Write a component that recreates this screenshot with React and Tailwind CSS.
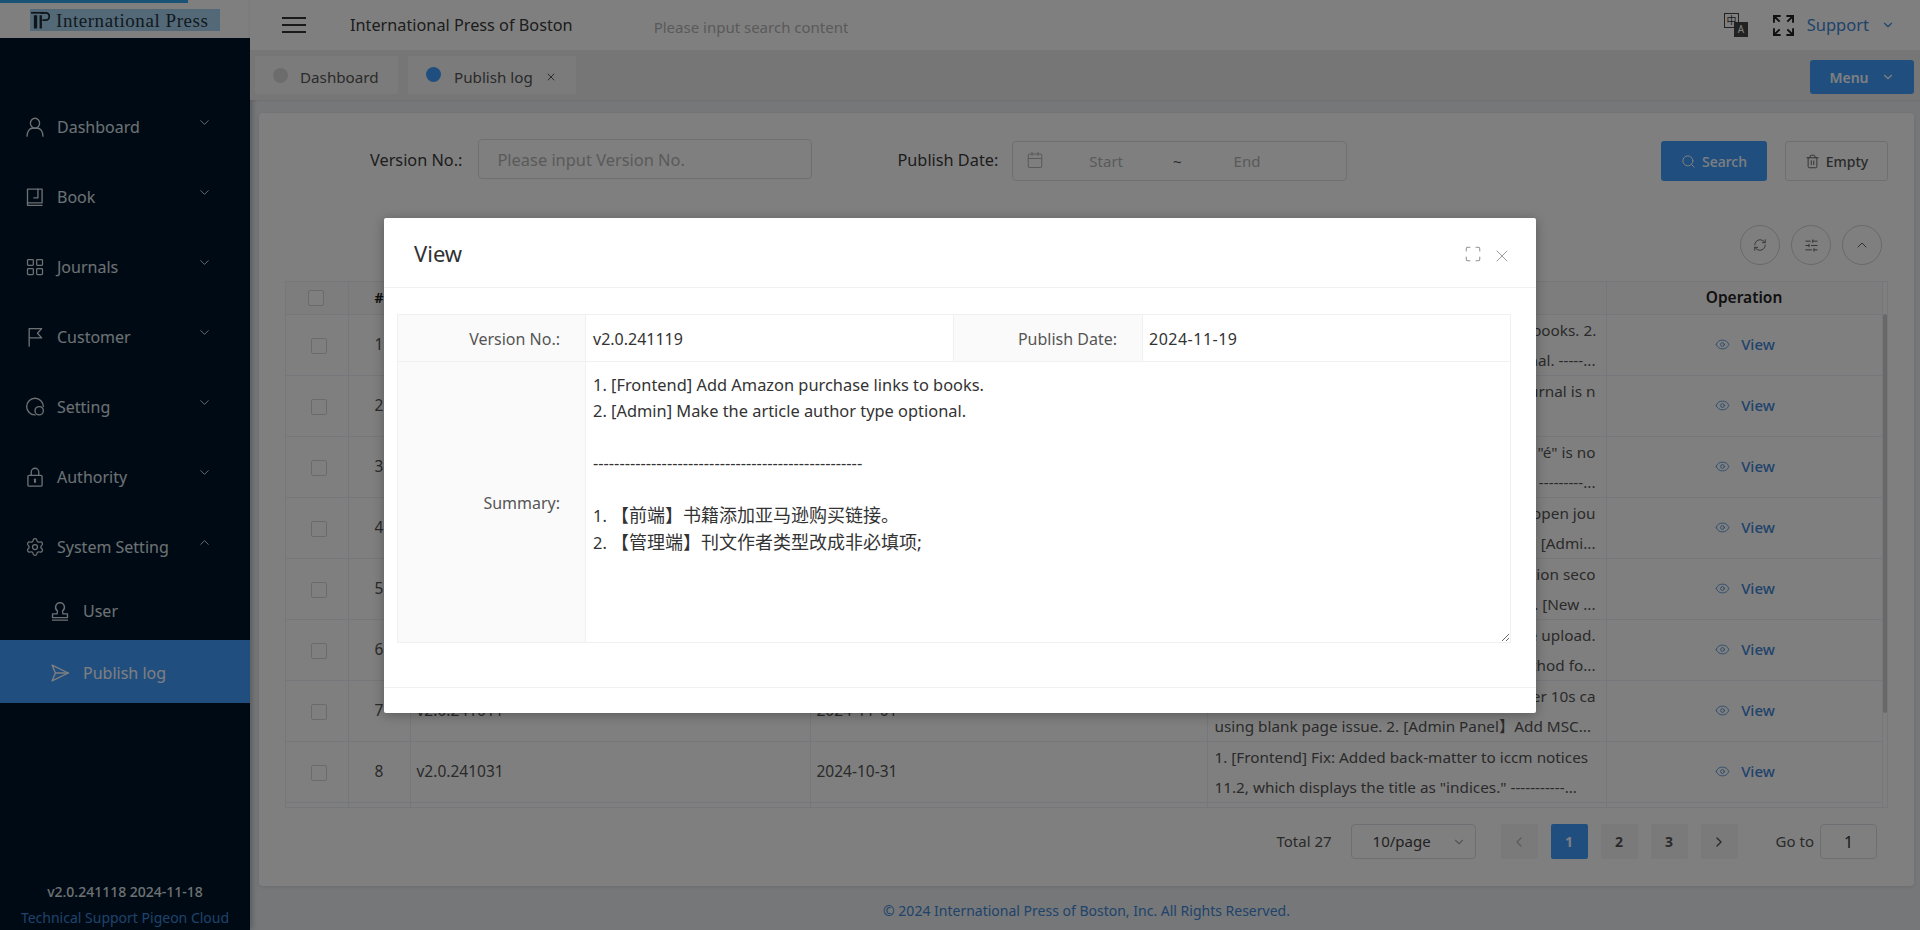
import { Calendar, ChevronDown, ChevronLeft, ChevronRight, ChevronUp, Eye, LayoutGrid, Maximize, RefreshCw, Search, Settings, SlidersHorizontal, Trash2, X } from "lucide-react";

const MENU = [
  { label: "Dashboard", icon: "user" },
  { label: "Book", icon: "book" },
  { label: "Journals", icon: "grid" },
  { label: "Customer", icon: "flag" },
  { label: "Setting", icon: "coin" },
  { label: "Authority", icon: "lock" },
];

const ROWS = [
  { no: 1, version: "v2.0.241119", date: "2024-11-19", a: "1. [Frontend] Add Amazon purchase links to books. 2.", b: "[Admin] Make the article author type optional. -----..." },
  { no: 2, version: "v2.0.241118", date: "2024-11-18", a: "1. [Frontend] Fix: the date of the open journal is n", b: "" },
  { no: 3, version: "v2.0.241115", date: "2024-11-15", a: "1. [Frontend] Fix: the character \"é\" is no", b: "t shown on the article page. ---------..." },
  { no: 4, version: "v2.0.241112", date: "2024-11-12", a: "1. [Frontend] Add a new section to the open jou", b: "rnal list of articles. [Admi..." },
  { no: 5, version: "v2.0.241108", date: "2024-11-08", a: "1. [Frontend] Fix the navigation seco", b: "ndary menu display. [New ..." },
  { no: 6, version: "v2.0.241105", date: "2024-11-05", a: "1. [Admin] Support batch file upload.", b: "2. [Admin] Change the sort method fo..." },
  { no: 7, version: "v2.0.241011", date: "2024-11-01", a: "1. [Frontend] Fix: reading after 10s ca", b: "using blank page issue. 2. [Admin Panel】Add MSC..." },
  { no: 8, version: "v2.0.241031", date: "2024-10-31", a: "1. [Frontend] Fix: Added back-matter to iccm notices", b: "11.2, which displays the title as \"indices.\" -----------..." },
];

function MenuIcon({ name }) {
  if (name === "grid") return <LayoutGrid size={20} strokeWidth={1.5} />;
  if (name === "gear") return <Settings size={20} strokeWidth={1.5} />;
  return (
    <svg viewBox="0 0 24 24" width="20" height="20" fill="none" stroke="currentColor" strokeWidth="1.6" strokeLinecap="round" strokeLinejoin="round">
      {name === "user" && (
        <>
          <ellipse cx="12" cy="7.500" rx="5.500" ry="6" />
          <path d="M2.500 23c0-6 3-9.500 6.500-9.500h6c3.500 0 6.500 3.500 6.500 9.500" />
        </>
      )}
      {name === "book" && (
        <>
          <path d="M3 19V2.500h17.500V19H3z" />
          <path d="M15.500 2.500v10.500h-5" />
          <path d="M3 19v3h17.500" />
        </>
      )}
      {name === "flag" && <path d="M5 23V2h15l-5 5.500 5 5.500H5" />}
      {name === "coin" && (
        <>
          <path d="M12 21.500a10 10 0 1 1 10-10" />
          <circle cx="17" cy="16.500" r="5" />
        </>
      )}
      {name === "lock" && (
        <>
          <rect x="3.500" y="10" width="17" height="13" rx="1.500" />
          <path d="M7.500 10V6a4.500 4.500 0 0 1 9 0v4" />
          <path d="M12 15v3" strokeWidth="2.500" />
        </>
      )}
      {name === "stamp" && (
        <>
          <path d="M12 2a5.500 5.500 0 0 0-3 10l-.5 3.500H3v4.500h18v-4.500h-5.500L15 12a5.500 5.500 0 0 0-3-10z" />
          <path d="M3 23h18" />
        </>
      )}
      {name === "plane" && (
        <>
          <path d="M2.500 2.500L22 12 2.500 21.500 6.500 12z" />
          <path d="M6.500 12H22" />
        </>
      )}
    </svg>
  );
}

function Sidebar() {
  return (
    <aside className="w-[250px] h-full shrink-0 bg-[#001529] flex flex-col relative shadow-[2px_0_6px_rgba(0,0,0,0.25)]">
      <div className="h-[38px] bg-white relative shrink-0 pt-[9px] pl-[30px]">
        <div className="absolute top-0 left-0 w-[188px] h-[3px] bg-[#36a6ee]" />
        <div className="w-[190px] h-[22px] bg-[#a9d3ef] flex items-center gap-[6px] pl-[1px]">
          <svg viewBox="0 0 20 18" width="19" height="18" className="text-[#1c2a36] shrink-0">
            <path d="M0 0.500h14v1.800H0z" fill="currentColor" />
            <path d="M3 4h3.500v14H3zM9 4h2.500v14H9z" fill="currentColor" />
            <path d="M10 1.500h5.500a3.800 3.800 0 0 1 0 7.600h-3.500" fill="none" stroke="currentColor" strokeWidth="2" />
          </svg>
          <span className="font-['Liberation_Serif',serif] text-[19px] tracking-[0.55px] leading-none text-[#253341] whitespace-nowrap">International Press</span>
        </div>
      </div>
      <nav className="pt-[54px] text-[#dde2e7] text-[16px]">
        {MENU.map((m) => (
          <div key={m.label} className="h-[70px] flex items-center pl-[25px] pr-[38px]">
            <MenuIcon name={m.icon} />
            <span className="ml-[12px] flex-1">{m.label}</span>
            <ChevronDown size={15} strokeWidth={1.5} className="-mt-[10px]" />
          </div>
        ))}
        <div className="h-[70px] flex items-center pl-[25px] pr-[38px]">
          <MenuIcon name="gear" />
          <span className="ml-[12px] flex-1">System Setting</span>
          <ChevronUp size={15} strokeWidth={1.5} className="-mt-[10px]" />
        </div>
        <div className="h-[58px] flex items-center pl-[50px]">
          <MenuIcon name="stamp" />
          <span className="ml-[13px]">User</span>
        </div>
        <div className="h-[63px] flex items-center pl-[50px] pt-[2px] bg-[#409eff] text-white">
          <MenuIcon name="plane" />
          <span className="ml-[13px]">Publish log</span>
        </div>
      </nav>
      <div className="mt-auto -mb-[1px] text-center text-[14px] leading-[26px]">
        <div className="text-[#dfe2e6] font-medium">v2.0.241118 2024-11-18</div>
        <div className="text-[#3f86d6]">Technical Support Pigeon Cloud</div>
      </div>
    </aside>
  );
}

function TopBar() {
  return (
    <header className="h-[50px] shrink-0 bg-white flex items-center pl-[32px] shadow-[0_1px_3px_rgba(0,0,0,0.12)] relative">
      <svg viewBox="0 0 24 16" width="24" height="16" className="text-[#333]">
        <path d="M0 1h24M0 8h24M0 15h24" stroke="currentColor" strokeWidth="2" />
      </svg>
      <span className="ml-[44px] text-[16.25px] text-[#3a3a3a]">International Press of Boston</span>
      <span className="ml-[81px] mt-[4px] text-[15px] text-[#b4b4b4]">Please input search content</span>
      <div className="ml-auto flex items-center pr-[25px]">
        <svg viewBox="0 0 24 24" width="24" height="24">
          <rect x="0.500" y="0.500" width="14" height="14" fill="#fff" stroke="#444" />
          <text x="7.500" y="11" fontSize="10" textAnchor="middle" fill="#333">中</text>
          <rect x="10" y="9" width="14" height="15" fill="#444" />
          <text x="17" y="20" fontSize="10" textAnchor="middle" fill="#fff">A</text>
        </svg>
        <svg viewBox="0 0 22 22" width="21" height="21" className="ml-[25px] text-[#222]" fill="none" stroke="currentColor" strokeWidth="2">
          <path d="M1 8V1h7M1 1l6 6M21 8V1h-7M21 1l-6 6M1 14v7h7M1 21l6-6M21 14v7h-7M21 21l-6-6" />
        </svg>
        <span className="ml-[13px] text-[16.5px] text-[#3f86d6]">Support</span>
        <ChevronDown size={14} className="ml-[12px] text-[#3f86d6]" />
      </div>
    </header>
  );
}

function TabBar() {
  return (
    <div className="h-[50px] shrink-0 bg-[#ececec] flex items-center pl-[5px] pr-[6px] shadow-[0_1px_2px_rgba(0,0,0,0.08)] relative">
      <div className="h-[38px] w-[143px] bg-[#f7f7f7] rounded-[3px] flex items-center pl-[18px] pt-[4px] text-[15.2px] text-[#555]">
        <span className="w-[15px] h-[15px] rounded-full bg-[#d9d9d9] -mt-[4px]" />
        <span className="ml-[12px]">Dashboard</span>
      </div>
      <div className="ml-[10px] h-[38px] w-[168px] bg-[#f7f7f7] rounded-[3px] flex items-center pl-[18px] pt-[4px] text-[15.2px] text-[#555]">
        <span className="w-[15px] h-[15px] rounded-full bg-[#409eff] -mt-[6px]" />
        <span className="ml-[13px]">Publish log</span>
        <X size={12} className="ml-[12px]" />
      </div>
      <button className="ml-auto mt-[4px] w-[104px] h-[34px] rounded-[3px] bg-[#409eff] text-white text-[14px] font-semibold flex items-center justify-center gap-[12px]">
        Menu
        <ChevronDown size={14} />
      </button>
    </div>
  );
}

function SearchForm() {
  return (
    <div className="flex items-center pl-[111px] pr-[26px] pt-[28px] text-[16.3px]">
      <label className="text-[#3a3a3a] -mt-[2px]">Version No.:</label>
      <input
        readOnly
        placeholder="Please input Version No."
        className="ml-[16px] -mt-[4px] w-[334px] h-[40px] px-[18px] text-[16.4px] border border-[#dcdfe6] rounded-[4px] placeholder:text-[#b4b4b4] outline-none"
      />
      <label className="ml-[85px] text-[#3a3a3a] -mt-[2px]">Publish Date:</label>
      <div className="ml-[14px] w-[335px] h-[40px] border border-[#dcdfe6] rounded-[4px] flex items-center pl-[13px] text-[15px] text-[#b4b4b4]">
        <Calendar size={18} strokeWidth={1.4} className="-mt-[3px]" />
        <span className="ml-[45px]">Start</span>
        <span className="ml-[50px] text-[#555]">~</span>
        <span className="ml-[52px]">End</span>
      </div>
      <button className="ml-auto w-[106px] h-[40px] rounded-[3px] bg-[#409eff] text-white text-[14px] font-medium flex items-center justify-center gap-[6px]">
        <Search size={15} strokeWidth={1.6} />
        Search
      </button>
      <button className="ml-[18px] w-[103px] h-[40px] rounded-[3px] border border-[#dcdfe6] text-[#555] text-[14px] font-medium flex items-center justify-center gap-[6px]">
        <Trash2 size={15} strokeWidth={1.4} />
        Empty
      </button>
    </div>
  );
}

function RoundButtons() {
  return (
    <div className="flex justify-end gap-[11px] pr-[32px] mt-[44px] text-[#555]">
      <span className="w-[40px] h-[40px] rounded-full border border-[#cfd2d8] flex items-center justify-center"><RefreshCw size={14} strokeWidth={1.4} /></span>
      <span className="w-[40px] h-[40px] rounded-full border border-[#cfd2d8] flex items-center justify-center"><SlidersHorizontal size={15} strokeWidth={1.4} /></span>
      <span className="w-[40px] h-[40px] rounded-full border border-[#cfd2d8] flex items-center justify-center"><ChevronUp size={16} strokeWidth={1.4} /></span>
    </div>
  );
}

function Checkbox({ className }) {
  return <span className={"block w-[16px] h-[16px] border border-[#d4d7de] bg-white rounded-[2px] " + className} />;
}

function DataTable() {
  return (
    <div className="mx-[26px] mt-[16px] h-[527px] w-[1603px] border border-[#ebeef5] flex overflow-hidden text-[15.5px] text-[#555]">
      <table className="w-[1596px] shrink-0 table-fixed border-collapse">
        <colgroup>
          <col className="w-[62px]" />
          <col className="w-[62px]" />
          <col className="w-[400px]" />
          <col className="w-[397px]" />
          <col className="w-[399px]" />
          <col className="w-[276px]" />
        </colgroup>
        <thead>
          <tr className="h-[32px] bg-[#fafafa]">
            <th className="border-r border-b border-[#ebeef5]"><Checkbox className="ml-[22px]" /></th>
            <th className="border-r border-b border-[#ebeef5] text-[14px] text-[#222]">#</th>
            <th className="border-r border-b border-[#ebeef5]" />
            <th className="border-r border-b border-[#ebeef5]" />
            <th className="border-r border-b border-[#ebeef5]" />
            <th className="border-r border-b border-[#ebeef5] text-[#222] font-semibold">Operation</th>
          </tr>
        </thead>
        <tbody>
          {ROWS.map((r) => (
            <tr key={r.no} className="h-[61px]">
              <td className="border-r border-b border-[#ebeef5]"><Checkbox className="ml-[25px] mt-[2px]" /></td>
              <td className="border-r border-b border-[#ebeef5] text-center">{r.no}</td>
              <td className="border-r border-b border-[#ebeef5] pl-[6px]">{r.version}</td>
              <td className="border-r border-b border-[#ebeef5] pl-[6px]">{r.date}</td>
              <td className="border-r border-b border-[#ebeef5] pl-[7px] pr-[10px] text-[15.3px] leading-[30px] whitespace-nowrap overflow-hidden">
                <div className={r.no < 8 ? "text-right" : ""}>{r.a}</div>
                <div className={r.no < 7 ? "text-right h-[30px]" : "h-[30px]"}>{r.b}</div>
              </td>
              <td className="border-r border-b border-[#ebeef5]">
                <span className="flex items-center justify-center gap-[11px] pl-[2px] text-[15px] text-[#3f86d6] font-medium">
                  <Eye size={15} strokeWidth={1.3} />
                  View
                </span>
              </td>
            </tr>
          ))}
          <tr className="h-[61px]">
            <td className="border-r border-[#ebeef5]" />
            <td className="border-r border-[#ebeef5]" />
            <td className="border-r border-[#ebeef5]" />
            <td className="border-r border-[#ebeef5]" />
            <td className="border-r border-[#ebeef5]" />
            <td className="border-r border-[#ebeef5]" />
          </tr>
        </tbody>
      </table>
      <div className="w-[7px] pt-[32px]">
        <div className="h-[399px] bg-[#d0d0d0] rounded-full" />
      </div>
    </div>
  );
}

function Pagination() {
  return (
    <div className="flex items-center justify-end mt-[16px] pr-[37px] text-[15px] text-[#555]">
      <span className="mr-[19px]">Total 27</span>
      <div className="w-[125px] h-[35px] border border-[#dcdfe6] rounded-[4px] flex items-center pl-[21px] pr-[9px] text-[#444]">
        <span className="flex-1">10/page</span>
        <ChevronDown size={14} className="text-[#aaa]" />
      </div>
      <div className="ml-[25px] flex gap-[13px] text-[14px] font-bold">
        <span className="w-[37px] h-[35px] rounded-[2px] bg-[#f4f4f5] text-[#bbb] flex items-center justify-center"><ChevronLeft size={16} /></span>
        <span className="w-[37px] h-[35px] rounded-[2px] bg-[#409eff] text-white flex items-center justify-center">1</span>
        <span className="w-[37px] h-[35px] rounded-[2px] bg-[#f4f4f5] flex items-center justify-center">2</span>
        <span className="w-[37px] h-[35px] rounded-[2px] bg-[#f4f4f5] flex items-center justify-center">3</span>
        <span className="w-[37px] h-[35px] rounded-[2px] bg-[#f4f4f5] flex items-center justify-center"><ChevronRight size={16} /></span>
      </div>
      <span className="ml-[38px]">Go to</span>
      <span className="ml-[6px] w-[57px] h-[35px] border border-[#dcdfe6] rounded-[4px] flex items-center justify-center text-[16px] text-[#333]">1</span>
    </div>
  );
}

function ViewDialog() {
  return (
    <div className="absolute inset-0 bg-black/50">
      <div className="w-[60%] h-[495px] mx-auto mt-[218px] bg-white rounded-[2px] shadow-[0_2px_12px_rgba(0,0,0,0.3)] flex flex-col">
        <div className="h-[70px] shrink-0 border-b border-[#f0f0f0] flex items-center pl-[30px] pr-[24px] pt-[2px]">
          <span className="text-[22px] text-[#303133] flex-1">View</span>
          <Maximize size={18} strokeWidth={1.4} className="text-[#909399]" />
          <X size={20} strokeWidth={1.1} className="ml-[10px] text-[#909399] mt-[5px]" />
        </div>
        <div className="pt-[26px] px-[13px] text-[16px] text-[#333] flex-1">
          <div className="w-fit grid grid-cols-[188px_368px_189px_368px] grid-rows-[47px_281px] border-t border-l border-[#f0f0f0]">
            <div className="bg-[#fafafa] border-r border-b border-[#f0f0f0] flex items-center justify-end pr-[25px] pt-[1px] text-[#555]">Version No.:</div>
            <div className="border-r border-b border-[#f0f0f0] flex items-center pl-[7px] pt-[1px]">v2.0.241119</div>
            <div className="bg-[#fafafa] border-r border-b border-[#f0f0f0] flex items-center justify-end pr-[25px] pt-[1px] text-[#555]">Publish Date:</div>
            <div className="border-r border-b border-[#f0f0f0] flex items-center pl-[6px] pt-[1px] tracking-[0.5px]">2024-11-19</div>
            <div className="bg-[#fafafa] border-r border-b border-[#f0f0f0] flex items-center justify-end pr-[25px] pt-[2px] text-[#555]">Summary:</div>
            <div className="col-span-3 border-r border-b border-[#f0f0f0]">
              <div className="h-full overflow-auto resize-y pl-[7px] pt-[10px] text-[16.4px] leading-[26px]">
                <div>1. [Frontend] Add Amazon purchase links to books.</div>
                <div>2. [Admin] Make the article author type optional.</div>
                <div className="h-[26px]" />
                <div>---------------------------------------------------</div>
                <div className="h-[26px]" />
                <div>1. <span className="text-[18px]">【前端】书籍添加亚马逊购买链接。</span></div>
                <div>2. <span className="text-[18px]">【管理端】刊文作者类型改成非必填项;</span></div>
              </div>
            </div>
          </div>
        </div>
        <div className="h-[26px] shrink-0 border-t border-[#f0f0f0]" />
      </div>
    </div>
  );
}

export default function App() {
  return (
    <div className="relative w-[1920px] h-[930px] flex overflow-hidden bg-white font-['Noto_Sans','Noto_Sans_CJK_SC',sans-serif]">
      <Sidebar />
      <div className="flex-1 flex flex-col min-w-0">
        <TopBar />
        <TabBar />
        <main className="flex-1 bg-[#ebeff2] pt-[13px] pl-[9px] pr-[6px] flex flex-col">
          <div className="h-[773px] bg-white rounded-[4px] shadow-[0_1px_4px_rgba(0,0,0,0.1)]">
            <SearchForm />
            <RoundButtons />
            <DataTable />
            <Pagination />
          </div>
          <p className="mt-[14px] text-center text-[14px] text-[#3f86d6]">© 2024 International Press of Boston, Inc. All Rights Reserved.</p>
        </main>
      </div>
      <ViewDialog />
    </div>
  );
}
